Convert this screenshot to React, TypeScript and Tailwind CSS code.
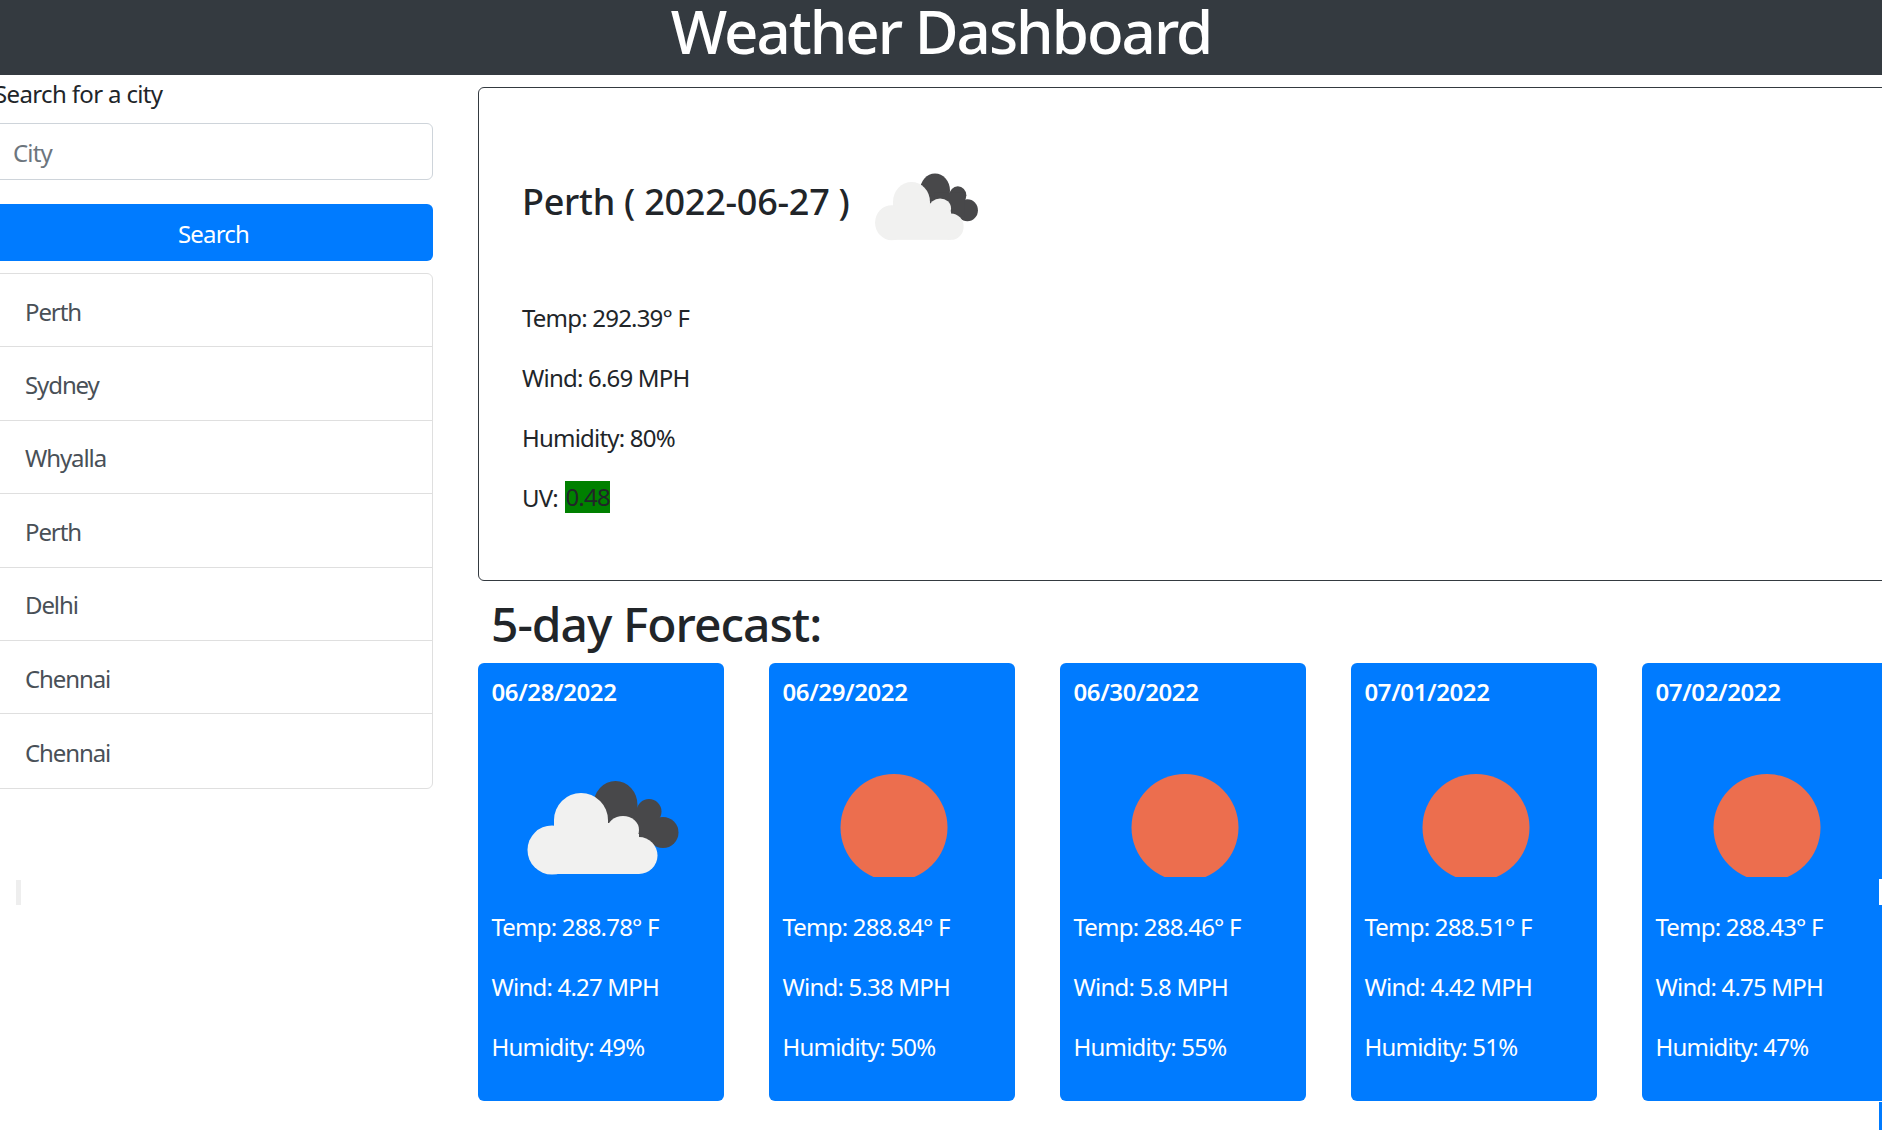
const CITIES = ["Perth", "Sydney", "Whyalla", "Perth", "Delhi", "Chennai", "Chennai"];

const FORECAST = [
  { date: "06/28/2022", icon: "cloud", temp: "288.78", wind: "4.27", humidity: "49" },
  { date: "06/29/2022", icon: "sun", temp: "288.84", wind: "5.38", humidity: "50" },
  { date: "06/30/2022", icon: "sun", temp: "288.46", wind: "5.8", humidity: "55" },
  { date: "07/01/2022", icon: "sun", temp: "288.51", wind: "4.42", humidity: "51" },
  { date: "07/02/2022", icon: "sun", temp: "288.43", wind: "4.75", humidity: "47" },
];

function CloudIcon({ className }: { className: string }) {
  return (
    <svg viewBox="0 0 160 105" preserveAspectRatio="none" className={className}>
      <g fill="#48484a" className="blur-[0.5px]">
        <ellipse cx="92.5" cy="33" rx="22" ry="24" />
        <circle cx="126" cy="39.5" r="12.5" />
        <circle cx="140" cy="60.5" r="15.5" />
        <rect x="92" y="36" width="44" height="36" />
      </g>
      <g fill="#f1f1f0" className="blur-[0.5px]">
        <circle cx="58" cy="48" r="27" />
        <rect x="31" y="48" width="54" height="42" />
        <circle cx="29" cy="78" r="24.5" />
        <ellipse cx="100" cy="58" rx="16" ry="14" />
        <rect x="84" y="51" width="16" height="20" />
        <circle cx="116" cy="83.5" r="18.5" />
        <rect x="29" y="62" width="87" height="40" />
      </g>
    </svg>
  );
}

function SunIcon({ className }: { className: string }) {
  return (
    <svg viewBox="0 0 160 105" preserveAspectRatio="none" className={className}>
      <circle cx="80" cy="55.5" r="53.5" fill="#ec6e4e" className="blur-[0.5px]" />
    </svg>
  );
}

export default function App() {
  return (
    <div className="relative h-[1130px] overflow-hidden bg-white font-['Noto_Sans',sans-serif] text-[24px] leading-[36px] tracking-[-0.8px] text-[#212529]">
      <header className="flex h-[75px] items-center justify-center bg-[#343a40]">
        <h1 className="-mt-[14px] text-[60px] leading-[72px] font-medium tracking-[-2px] text-white">Weather Dashboard</h1>
      </header>

      <div className="flex">
        <aside className="-ml-[6px] w-[439px] shrink-0 pt-[1px]">
          <p className="tracking-[-0.65px]">Search for a city</p>
          <div className="mt-[11px] flex h-[57px] items-center rounded-[6px] border border-[#ced4da] pl-[18px] pt-[2px] text-[#6c757d]">
            City
          </div>
          <button className="mt-[24px] flex h-[57px] w-full items-center justify-center rounded-[6px] bg-[#007bff] pt-[2px] text-white">
            Search
          </button>
          <ul className="mt-[12px] overflow-hidden rounded-[6px] border border-[#dfdfdf] tracking-[-1.1px] text-[#495057]">
            {CITIES.map((city, i) => (
              <li key={i} className="flex h-[73.4px] items-center border-b border-[#dfdfdf] pl-[30px] pt-[3px] last:border-b-0">
                {city}
              </li>
            ))}
          </ul>
        </aside>

        <main className="ml-[45px] min-w-0 flex-1 pt-[12px]">
          <section className="flex h-[494px] w-[1500px] flex-col rounded-[6px] border-[1.5px] border-[#343a40] pl-[43px] pt-[79px]">
            <div className="flex h-[75px] items-center">
              <h4 className="-mt-[6px] text-[36px] leading-[43px] font-medium tracking-[-0.25px]">Perth ( 2022-06-27 )</h4>
              <CloudIcon className="ml-[22px] h-[75px] w-[109px]" />
            </div>
            <div className="mt-[58px] flex flex-col gap-[24px]">
              <p>Temp: 292.39° F</p>
              <p>Wind: 6.69 MPH</p>
              <p>Humidity: 80%</p>
              <p>
                UV: <span className="ml-[2px] mt-[1px] inline-block h-[32px] align-top bg-[#008000] leading-[32px]">0.48</span>
              </p>
            </div>
          </section>

          <h2 className="ml-[13px] mt-[14px] text-[48px] leading-[58px] font-medium tracking-[-1px]">5-day Forecast:</h2>

          <div className="mt-[10px] flex gap-[45px]">
            {FORECAST.map((day) => (
              <article key={day.date} className="h-[438px] w-[246px] shrink-0 rounded-[6px] bg-[#007bff] px-[13.5px] pt-[11px] text-white">
                <p className="font-semibold tracking-[-0.4px]">{day.date}</p>
                <div className="mt-[62px] flex h-[105px] justify-center pl-[3px]">
                  {day.icon === "cloud" ? (
                    <CloudIcon className="h-[105px] w-[160px] shrink-0" />
                  ) : (
                    <SunIcon className="h-[105px] w-[160px] shrink-0" />
                  )}
                </div>
                <div className="mt-[32px] flex flex-col gap-[24px]">
                  <p>Temp: {day.temp}° F</p>
                  <p>Wind: {day.wind} MPH</p>
                  <p>Humidity: {day.humidity}%</p>
                </div>
              </article>
            ))}
          </div>
        </main>
      </div>

      <div className="absolute left-[16px] top-[880px] h-[25px] w-[5px] bg-[#eeeeee]" />
      <div className="absolute right-0 top-[879px] h-[26px] w-[3px] bg-white" />
      <div className="absolute right-0 top-[1102px] h-[28px] w-[3px] bg-[#007bff]" />
    </div>
  );
}
